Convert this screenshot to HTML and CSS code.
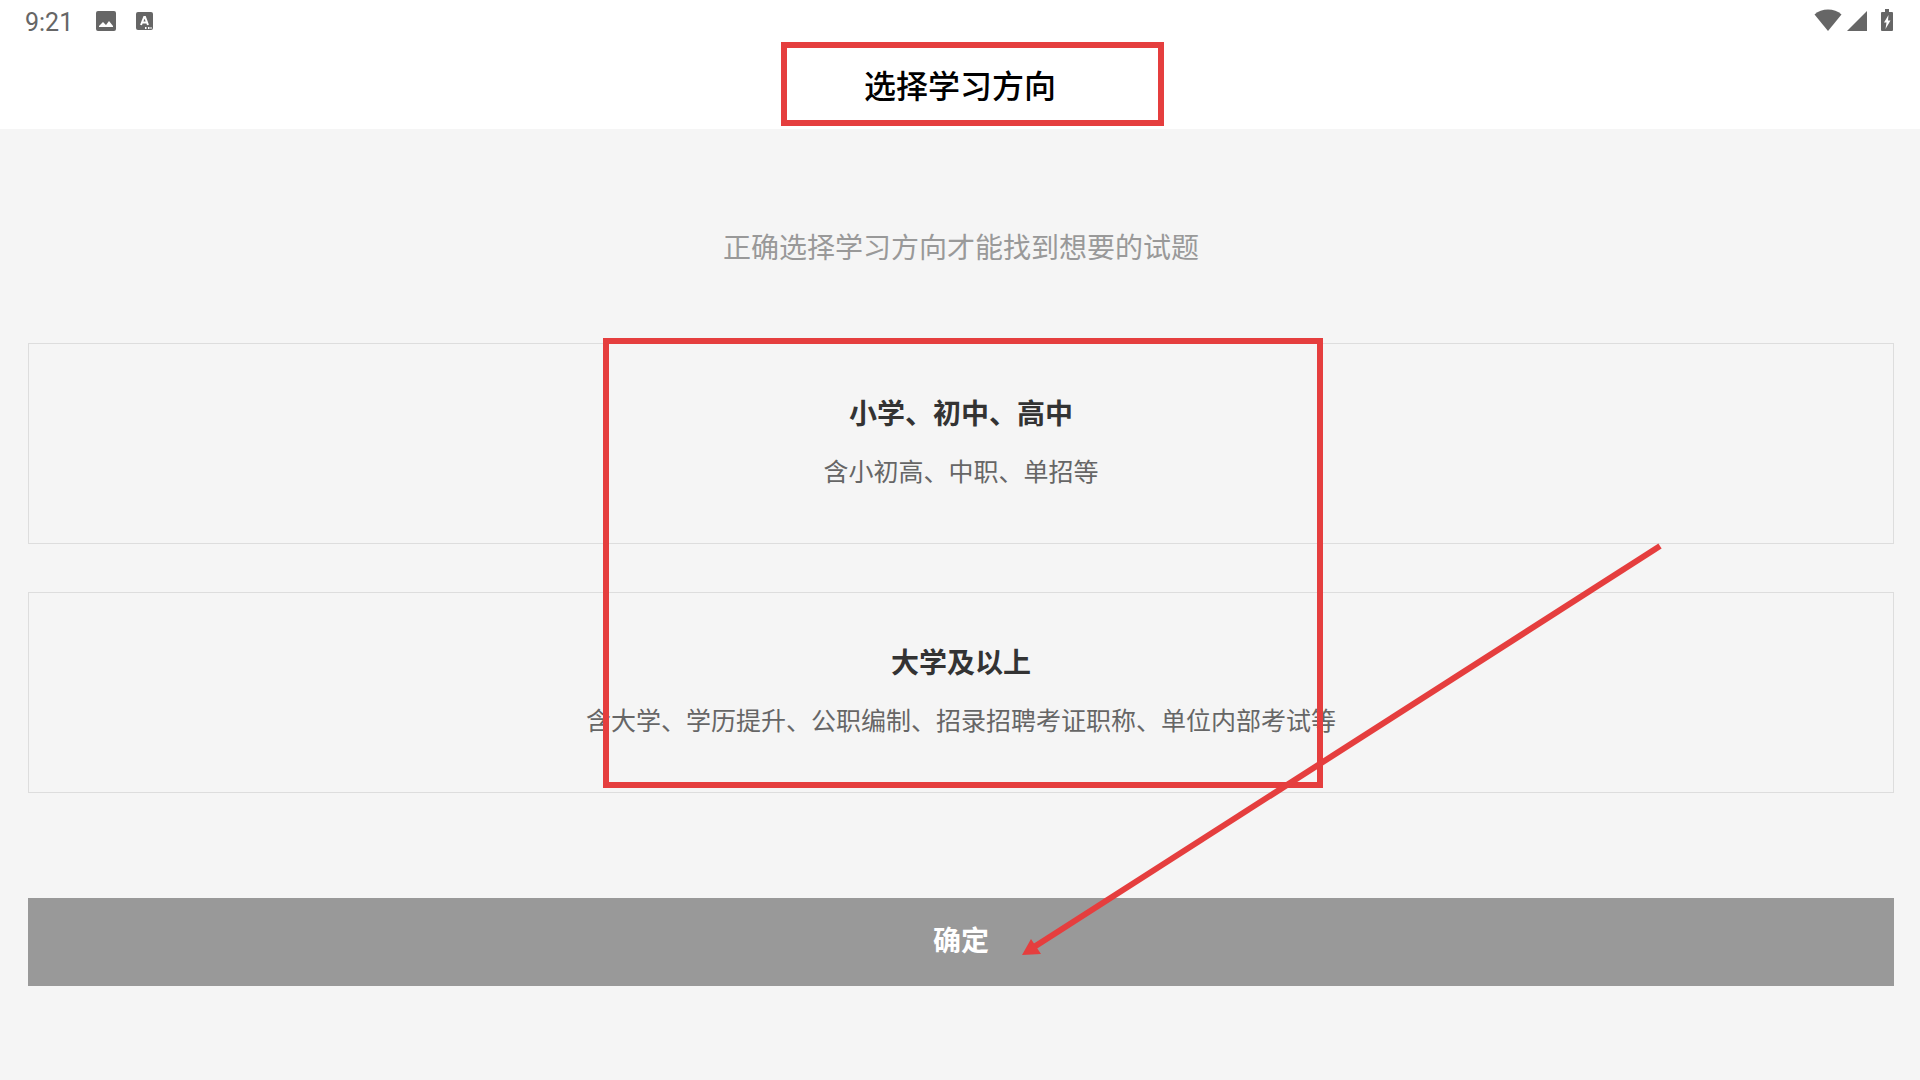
FILE: index.html
```html
<!DOCTYPE html>
<html lang="zh-CN">
<head>
    <meta charset="UTF-8">
    <meta name="viewport" content="width=device-width, initial-scale=1.0">
    <title>选择学习方向</title>
    <link rel="stylesheet" href="styles.css">
</head>
<body>
    <!-- 状态栏 -->
    <div class="status-bar">
        <div class="status-left">
            <span class="time">9:21</span>
            <svg class="icon-image" width="20" height="20" viewBox="0 0 20 20">
                <path fill-rule="evenodd" d="M2 0h16a2 2 0 0 1 2 2v16a2 2 0 0 1-2 2H2a2 2 0 0 1-2-2V2a2 2 0 0 1 2-2zM3 16h14v-1l-4-5-3 4-3-3-4 4z"/>
            </svg>
            <svg class="icon-app" width="17" height="18" viewBox="0 0 17 18">
                <rect width="17" height="18" rx="2"/>
                <path class="mark" d="M5 13L8.200 5H9L12 13M6.200 10.500H10.800"/>
                <path class="dots" d="M9 16h1.500M12 16h1.500M14.500 16h1"/>
            </svg>
        </div>
        <div class="status-right">
            <svg width="28" height="22" viewBox="0 0 28 22">
                <path d="M14 22L.5 5.500C4 2 9 .5 14 .5s10 1.500 13.500 5z"/>
            </svg>
            <svg class="icon-signal" width="20" height="20" viewBox="0 0 20 20">
                <path d="M20 0v20H0z"/>
            </svg>
            <svg class="icon-battery" width="12" height="22" viewBox="0 0 12 22">
                <path fill-rule="evenodd" d="M4 0h4v3h3a1 1 0 0 1 1 1v17a1 1 0 0 1-1 1H1a1 1 0 0 1-1-1V4a1 1 0 0 1 1-1h3zM7.500 6L3 13.500h2.500L4.500 20L9.500 11.500H7z"/>
            </svg>
        </div>
    </div>

    <header class="title-bar">
        <h1>选择学习方向</h1>
    </header>

    <main class="content">
        <p class="hint">正确选择学习方向才能找到想要的试题</p>

        <div class="options">
            <button type="button" class="option">
                <span class="option-title">小学、初中、高中</span>
                <span class="option-desc">含小初高、中职、单招等</span>
            </button>
            <button type="button" class="option">
                <span class="option-title">大学及以上</span>
                <span class="option-desc">含大学、学历提升、公职编制、招录招聘考证职称、单位内部考试等</span>
            </button>
        </div>

        <button type="button" class="confirm">确定</button>
    </main>

    <!-- 红色标注框和箭头 -->
    <svg class="marks" viewBox="0 0 1920 1080" aria-hidden="true">
        <rect x="784" y="45" width="377" height="78"/>
        <rect x="606" y="341" width="714" height="444"/>
        <path d="M1660 546L1034 947"/>
        <path class="arrow-head" d="M1022 955L1031 939L1041 954z"/>
    </svg>
</body>
</html>
```
FILE: styles.css
```css
* {
    box-sizing: border-box;
}

body {
    position: relative;
    margin: 0;
    min-height: 100vh;
    background-color: #f5f5f5;
    font-family: Roboto, "Noto Sans CJK SC", sans-serif;
    color: #333;
}

button {
    font-family: inherit;
    cursor: pointer;
}

.status-bar {
    display: flex;
    justify-content: space-between;
    align-items: center;
    height: 42px;
    padding: 0 27px 0 25px;
    background-color: #fff;
    color: #666;
}

.status-bar svg {
    display: block;
    fill: #666;
}

.status-left,
.status-right {
    display: flex;
    align-items: center;
}

.status-right {
    gap: 5px;
    padding-bottom: 2px;
}

.time {
    padding-top: 3px;
    font-size: 25px;
    line-height: 42px;
}

.icon-image {
    margin-left: 23px;
}

.icon-app {
    margin-left: 20px;
}

.icon-app .mark,
.icon-app .dots {
    fill: none;
    stroke: #fff;
    stroke-width: 2;
}

.icon-signal {
    margin-top: 2px;
}

.icon-battery {
    margin-left: 9px;
}

.title-bar {
    padding: 18px 0 21px;
    background-color: #fff;
    text-align: center;
}

h1 {
    margin: 0;
    font-size: 32px;
    line-height: 48px;
    font-weight: 500;
    font-family: "Noto Sans CJK SC", sans-serif;
    color: #000;
}

.content {
    padding: 100px 26px 40px 28px;
}

.hint {
    margin: 0 0 74px;
    font-size: 28px;
    line-height: 40px;
    text-align: center;
    color: #999;
}

.options {
    display: flex;
    flex-direction: column;
    gap: 48px;
}

.option {
    display: flex;
    flex-direction: column;
    align-items: center;
    gap: 20px;
    padding: 51px 0 52px;
    border: 1px solid #ddd;
    background: none;
}

.option-title {
    font-size: 28px;
    line-height: 40px;
    font-weight: bold;
    color: #333;
}

.option-desc {
    font-size: 25px;
    line-height: 36px;
    color: #666;
}

.confirm {
    display: block;
    width: 100%;
    margin-top: 105px;
    padding: 24px 0;
    border: none;
    background-color: #999;
    color: #fff;
    font-size: 28px;
    line-height: 40px;
    font-weight: bold;
}

.marks {
    position: absolute;
    top: 0;
    left: 0;
    width: 100%;
    fill: none;
    stroke: #e53e3e;
    stroke-width: 6;
    pointer-events: none;
}

.marks .arrow-head {
    fill: #e53e3e;
    stroke: none;
}
```
